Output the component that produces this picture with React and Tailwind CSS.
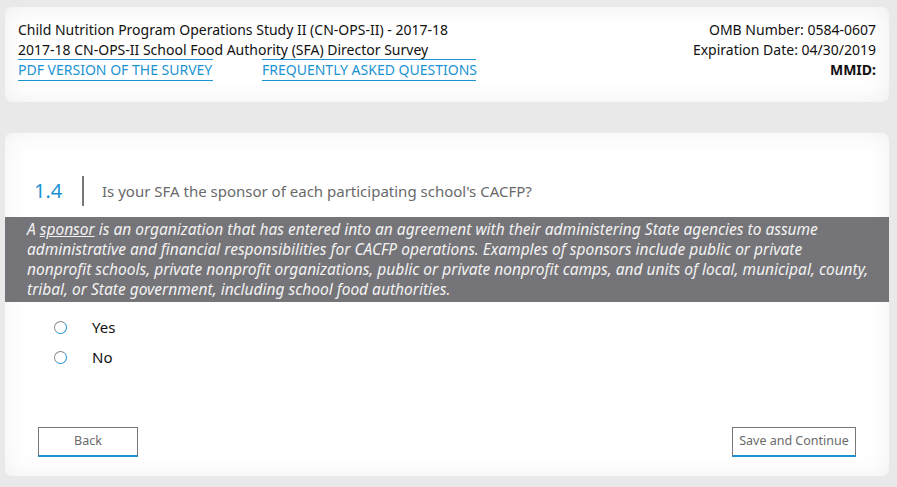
export default function App() {
  const font = { fontFamily: '"Noto Sans", "Open Sans", sans-serif' };
  return (
    <div className="w-[897px] h-[487px] bg-[#e9e9e9] pt-[7px] px-[5px] overflow-hidden" style={font}>
      <div className="h-[95px] w-[884px] rounded-[7px] bg-white shadow-[inset_0_0_24px_rgba(0,0,0,0.07)] flex justify-between pl-[13px] pr-[13px] pt-[13px] text-[14px] leading-[20px] text-[#111]">
        <div className="flex flex-col">
          <div>Child Nutrition Program Operations Study II (CN-OPS-II) - 2017-18</div>
          <div>2017-18 CN-OPS-II School Food Authority (SFA) Director Survey</div>
          <div className="flex gap-[49px] -mt-[1px]">
            <a className="w-[195px] border-y border-[#1c93d1] text-[#1c93d1] leading-[20px] whitespace-nowrap">PDF VERSION OF THE SURVEY</a>
            <a className="w-[214px] border-y border-[#1c93d1] text-[#1c93d1] leading-[20px] whitespace-nowrap">FREQUENTLY ASKED QUESTIONS</a>
          </div>
        </div>
        <div className="flex flex-col items-end">
          <div>OMB Number: 0584-0607</div>
          <div>Expiration Date: 04/30/2019</div>
          <div className="font-bold">MMID:</div>
        </div>
      </div>

      <div className="mt-[31px] h-[343px] w-[884px] rounded-[7px] bg-white shadow-[inset_0_0_24px_rgba(0,0,0,0.06)] flex flex-col">
        <div className="flex items-center h-[30px] mt-[43px] pl-[29px]">
          <div className="shrink-0 text-[20px] leading-[30px] text-[#1c93d1] w-[48px]">1.4</div>
          <div className="shrink-0 w-[2px] h-[30px] bg-[#777]"></div>
          <div className="ml-[18px] whitespace-nowrap text-[15px] leading-[30px] text-[#6a6a6a]">Is your SFA the sponsor of each participating school's CACFP?</div>
        </div>
        <div className="mt-[11px] h-[85px] bg-[#757478] text-[#f2f2f2] italic text-[15.5px] leading-[20px] pl-[22px] pt-[2px] pr-[4px] whitespace-nowrap">
          A <span className="underline">sponsor</span> is an organization that has entered into an agreement with their administering State agencies to assume<br />
          administrative and financial responsibilities for CACFP operations. Examples of sponsors include public or private<br />
          nonprofit schools, private nonprofit organizations, public or private nonprofit camps, and units of local, municipal, county,<br />
          tribal, or State government, including school food authorities.
        </div>
        <div className="flex flex-col pl-[49px] mt-[16px] gap-[12px]">
          {['Yes', 'No'].map((l) => (
            <div key={l} className="flex items-center h-[18px]">
              <div className="w-[13px] h-[13px] rounded-full border border-[#1c93d1] border-l-[#888] border-t-[#888]"></div>
              <div className="ml-[25px] text-[15px] text-[#111]">{l}</div>
            </div>
          ))}
        </div>
        <div className="mt-auto mb-[19px] flex justify-between pl-[33px] pr-[33px]">
          <button className="w-[100px] h-[30px] border border-[#777] border-b-2 border-b-[#1c93d1] text-[12.5px] text-[#6a6a6a] bg-white">Back</button>
          <button className="w-[124px] h-[30px] border border-[#777] border-b-2 border-b-[#1c93d1] text-[12.5px] text-[#6a6a6a] bg-white">Save and Continue</button>
        </div>
      </div>
    </div>
  );
}
